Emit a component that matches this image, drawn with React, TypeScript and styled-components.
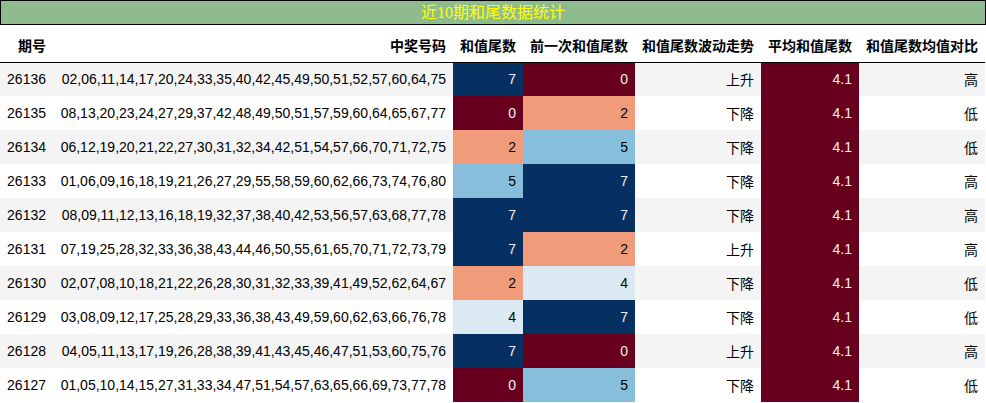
import React from "react";
import styled, { createGlobalStyle } from "styled-components";

const Global = createGlobalStyle`
  html, body { margin: 0; padding: 0; background: #ffffff; }
  body { font-family: "Liberation Sans", Arial, "Noto Sans CJK SC", sans-serif; }
`;

const Page = styled.div`
  width: 986px;
`;

const Title = styled.div`
  box-sizing: border-box;
  height: 25px;
  border: 1px solid #000;
  background: #8fbc8f;
  color: #ffff00;
  font-family: "Liberation Serif", "Noto Sans CJK SC", serif;
  font-size: 16px;
  line-height: 23px;
  text-align: center;
`;

const Table = styled.table`
  width: 985px;
  border-collapse: collapse;
  table-layout: fixed;
  font-size: 14px;
  color: #000;
`;

const HeadCell = styled.th`
  height: 37px;
  padding: 4px 7px 0 0;
  box-sizing: border-box;
  text-align: right;
  font-weight: bold;
  font-family: "Liberation Sans", Arial, "Noto Sans CJK SC", sans-serif;
  border-bottom: 1px solid #000;
  white-space: nowrap;
`;

const Row = styled.tr<{ $stripe: boolean }>`
  background: ${(p) => (p.$stripe ? "#f4f4f4" : "#ffffff")};
`;

const Cell = styled.td<{ $bg?: string; $fg?: string }>`
  height: 34px;
  padding: 0 7px 0 0;
  box-sizing: border-box;
  text-align: right;
  white-space: nowrap;
  background: ${(p) => p.$bg || "transparent"};
  color: ${(p) => p.$fg || "#000"};
  font-family: "Liberation Sans", Arial, "Noto Sans CJK SC", sans-serif;
`;

const palette: Record<number, [string, string]> = {
  0: ["#67001f", "#f1f1f1"],
  2: ["#f09c7b", "#000"],
  4: ["#dbe9f2", "#000"],
  5: ["#87bedb", "#000"],
  7: ["#053061", "#f1f1f1"],
};

type Rec = [string, string, number, number, string, string];

const rows: Rec[] = [
  ["26136", "02,06,11,14,17,20,24,33,35,40,42,45,49,50,51,52,57,60,64,75", 7, 0, "上升", "高"],
  ["26135", "08,13,20,23,24,27,29,37,42,48,49,50,51,57,59,60,64,65,67,77", 0, 2, "下降", "低"],
  ["26134", "06,12,19,20,21,22,27,30,31,32,34,42,51,54,57,66,70,71,72,75", 2, 5, "下降", "低"],
  ["26133", "01,06,09,16,18,19,21,26,27,29,55,58,59,60,62,66,73,74,76,80", 5, 7, "下降", "高"],
  ["26132", "08,09,11,12,13,16,18,19,32,37,38,40,42,53,56,57,63,68,77,78", 7, 7, "下降", "高"],
  ["26131", "07,19,25,28,32,33,36,38,43,44,46,50,55,61,65,70,71,72,73,79", 7, 2, "上升", "高"],
  ["26130", "02,07,08,10,18,21,22,26,28,30,31,32,33,39,41,49,52,62,64,67", 2, 4, "下降", "低"],
  ["26129", "03,08,09,12,17,25,28,29,33,36,38,43,49,59,60,62,63,66,76,78", 4, 7, "下降", "低"],
  ["26128", "04,05,11,13,17,19,26,28,38,39,41,43,45,46,47,51,53,60,75,76", 7, 0, "上升", "高"],
  ["26127", "01,05,10,14,15,27,31,33,34,47,51,54,57,63,65,66,69,73,77,78", 0, 5, "下降", "低"],
];

const widths = [53, 400, 70, 112, 126, 98, 126];
const heads = ["期号", "中奖号码", "和值尾数", "前一次和值尾数", "和值尾数波动走势", "平均和值尾数", "和值尾数均值对比"];

export default function App() {
  return (
    <Page>
      <Global />
      <Title>近10期和尾数据统计</Title>
      <Table>
        <colgroup>
          {widths.map((w, i) => (
            <col key={i} style={{ width: w }} />
          ))}
        </colgroup>
        <thead>
          <tr>
            {heads.map((h) => (
              <HeadCell key={h}>{h}</HeadCell>
            ))}
          </tr>
        </thead>
        <tbody>
          {rows.map((r, i) => (
            <Row key={r[0]} $stripe={i % 2 === 0}>
              <Cell>{r[0]}</Cell>
              <Cell>{r[1]}</Cell>
              <Cell $bg={palette[r[2]][0]} $fg={palette[r[2]][1]}>{r[2]}</Cell>
              <Cell $bg={palette[r[3]][0]} $fg={palette[r[3]][1]}>{r[3]}</Cell>
              <Cell>{r[4]}</Cell>
              <Cell $bg="#67001f" $fg="#f1f1f1">4.1</Cell>
              <Cell>{r[5]}</Cell>
            </Row>
          ))}
        </tbody>
      </Table>
    </Page>
  );
}
